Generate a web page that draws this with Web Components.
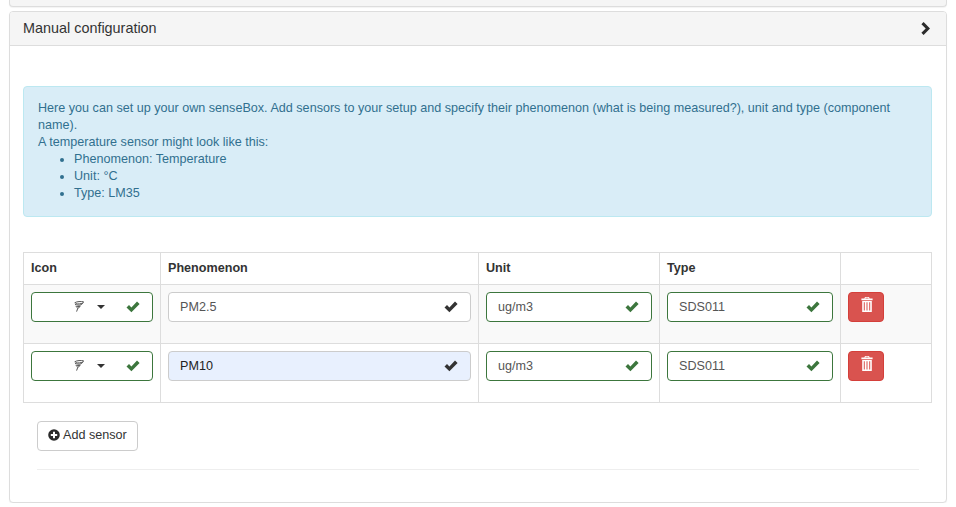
<!DOCTYPE html>
<html>
<head>
<meta charset="utf-8">
<title>Manual configuration</title>
<style>
html, body { margin: 0; padding: 0; background: #fff; }
body { font: 12.6px/17px "Liberation Sans", Arial, sans-serif; color: #333; overflow: hidden; }
</style>
</head>
<body>
<config-page>
  <stub-panel></stub-panel>
  <collapse-panel title="Manual configuration">
    <info-alert>
      Here you can set up your own senseBox. Add sensors to your setup and specify their phenomenon (what is being measured?), unit and type (component name).<br>
      A temperature sensor might look like this:
      <ul>
        <li>Phenomenon: Temperature</li>
        <li>Unit: °C</li>
        <li>Type: LM35</li>
      </ul>
    </info-alert>
    <sensor-table>
      <sensor-row phenomenon="PM2.5" unit="ug/m3" type="SDS011"></sensor-row>
      <sensor-row phenomenon="PM10" unit="ug/m3" type="SDS011" autofilled></sensor-row>
    </sensor-table>
    <add-button>Add sensor</add-button>
  </collapse-panel>
</config-page>

<script>
const CHECK = `<svg viewBox="0 0 14 12" width="14" height="12"><path fill="currentColor" d="M0.5 6.6 L3 4 L5.4 6.4 L11 0.6 L13.6 3 L5.4 11.2 Z"/></svg>`;

class ConfigPage extends HTMLElement {
  constructor() {
    super();
    this.attachShadow({ mode: 'open' }).innerHTML = `
      <style>
        :host { display: flex; flex-direction: column; gap: 4px; padding: 0 9px; }
      </style>
      <slot></slot>`;
  }
}

class StubPanel extends HTMLElement {
  constructor() {
    super();
    this.attachShadow({ mode: 'open' }).innerHTML = `
      <style>
        :host {
          display: block; height: 6px; background: #f5f5f5;
          border: 1px solid #ddd; border-top: 0;
          border-radius: 0 0 4px 4px; box-shadow: 0 1px 1px rgba(0,0,0,.05);
        }
      </style>`;
  }
}

class CollapsePanel extends HTMLElement {
  constructor() {
    super();
    this.attachShadow({ mode: 'open' }).innerHTML = `
      <style>
        :host {
          display: block; background: #fff; border: 1px solid #ddd; border-radius: 4px;
          box-shadow: 0 1px 1px rgba(0,0,0,.05);
        }
        .heading {
          display: flex; justify-content: space-between; align-items: center;
          height: 33px; padding: 0 16px 0 13px; background: #f5f5f5;
          border-bottom: 1px solid #ddd; border-radius: 3px 3px 0 0; color: #333; font-size: 14.4px;
        }
        .body { padding: 40px 14px 32px 13px; }
        svg { display: block; }
      </style>
      <div class="heading">
        <span id="title"></span>
        <svg viewBox="0 0 9 13" width="9" height="13"><path fill="#2b2b2b" d="M2.6 0 L9 6.5 L2.6 13 L0.4 10.8 L4.7 6.5 L0.4 2.2 Z"/></svg>
      </div>
      <div class="body"><slot></slot></div>`;
    this.shadowRoot.getElementById('title').textContent = this.getAttribute('title');
  }
}

class InfoAlert extends HTMLElement {
  constructor() {
    super();
    this.attachShadow({ mode: 'open' }).innerHTML = `
      <style>
        :host {
          display: block; padding: 13px 14px 14px; color: #31708f; background: #d9edf7;
          border: 1px solid #bce8f1; border-radius: 4px;
        }
        ::slotted(ul) { margin: 0; padding-left: 36px; }
      </style>
      <slot></slot>`;
  }
}

class SensorTable extends HTMLElement {
  constructor() {
    super();
    this.attachShadow({ mode: 'open' }).innerHTML = `
      <style>
        :host {
          display: block; margin-top: 35px; border: 1px solid #ddd; border-bottom-width: 0;
        }
        .head {
          display: grid; grid-template-columns: 136px 318px 181px 181px 1fr;
          height: 31px; border-bottom: 1px solid #ddd; font-weight: bold;
        }
        .head div { padding: 7px; border-left: 1px solid #ddd; }
        .head div:first-child { border-left: 0; }
        ::slotted(sensor-row:nth-of-type(odd)) { background: #f9f9f9; }
      </style>
      <div class="head">
        <div>Icon</div><div>Phenomenon</div><div>Unit</div><div>Type</div><div></div>
      </div>
      <slot></slot>`;
  }
}

class SensorRow extends HTMLElement {
  constructor() {
    super();
    this.attachShadow({ mode: 'open' }).innerHTML = `
      <style>
        :host {
          display: grid; grid-template-columns: 136px 318px 181px 181px 1fr;
          height: 58px; border-bottom: 1px solid #ddd;
        }
        .cell { padding: 7px; border-left: 1px solid #ddd; }
        .cell:first-of-type { border-left: 0; }
        .del {
          display: flex; align-items: flex-start; justify-content: center;
          width: 36px; height: 30px; box-sizing: border-box; padding: 4px 0 0 1px; background: #d9534f;
          border: 1px solid #d43f3a; border-radius: 4px;
        }
        svg { display: block; }
      </style>
      <div class="cell"><icon-select></icon-select></div>
      <div class="cell"><text-field id="p"></text-field></div>
      <div class="cell"><text-field id="u" valid></text-field></div>
      <div class="cell"><text-field id="t" valid></text-field></div>
      <div class="cell">
        <div class="del">
          <svg viewBox="0 0 12 15" width="12" height="15">
            <path fill="#fff" fill-rule="evenodd" d="M4 0 H8 L8.6 1.6 H11.6 V3.2 H0.4 V1.6 H3.4 Z M4.6 0.8 L4.4 1.6 H7.6 L7.4 0.8 Z M1.2 4 H10.8 V15 H1.2 Z M2.8 5.2 V13.6 H3.8 V5.2 Z M5.5 5.2 V13.6 H6.5 V5.2 Z M8.2 5.2 V13.6 H9.2 V5.2 Z"/>
          </svg>
        </div>
      </div>`;
    const root = this.shadowRoot;
    root.getElementById('p').setAttribute('value', this.getAttribute('phenomenon'));
    root.getElementById('u').setAttribute('value', this.getAttribute('unit'));
    root.getElementById('t').setAttribute('value', this.getAttribute('type'));
    if (this.hasAttribute('autofilled')) root.getElementById('p').setAttribute('autofilled', '');
  }
}

class TextField extends HTMLElement {
  static get observedAttributes() { return ['value']; }
  constructor() {
    super();
    this.attachShadow({ mode: 'open' }).innerHTML = `
      <style>
        :host {
          display: flex; align-items: center; justify-content: space-between;
          height: 30px; box-sizing: border-box; padding: 0 12px 0 11px;
          background: #fff; color: #555; border: 1px solid #ccc; border-radius: 4px;
        }
        :host([valid]) { border-color: #3c763d; }
        :host([autofilled]) { background: #e8f0fe; color: #222; }
        svg { display: block; color: #333; }
        :host([valid]) svg { color: #3c763d; }
      </style>
      <span id="v"></span>${CHECK}`;
  }
  attributeChangedCallback(name, oldValue, value) {
    this.shadowRoot.getElementById('v').textContent = value;
  }
}

class IconSelect extends HTMLElement {
  constructor() {
    super();
    this.attachShadow({ mode: 'open' }).innerHTML = `
      <style>
        :host {
          display: flex; align-items: center; height: 30px; box-sizing: border-box;
          padding: 0 0 0 42px; background: #fff; border: 1px solid #3c763d; border-radius: 4px;
        }
        svg { display: block; }
        .tornado { margin-bottom: 2px; }
        .caret {
          margin-left: 13px; width: 0; height: 0;
          border-top: 4px solid #333; border-left: 4px solid transparent; border-right: 4px solid transparent;
        }
        .ok { margin-left: 21px; color: #3c763d; }
      </style>
      <svg class="tornado" viewBox="0 0 10 11" width="10" height="11" fill="none" stroke="#555" stroke-width="1">
        <path d="M0.6 1.8 C3 0.4 7 0.3 9.6 0.8 C9 2.2 8 3.4 7 3.8 C5 4.4 2.8 4.2 1 3.2 M1.6 2.6 C4 3.2 6.6 3 8.8 2 M1.6 5.2 C3 5.8 4.8 5.6 6.2 5 L4.8 6.9 C4 7.2 3.2 7 2.6 6.6 M3.8 7.2 L2.6 10.6"/>
      </svg>
      <span class="caret"></span>
      <span class="ok">${CHECK}</span>`;
  }
}

class AddButton extends HTMLElement {
  constructor() {
    super();
    this.attachShadow({ mode: 'open' }).innerHTML = `
      <style>
        :host { display: block; margin: 18px 13px 0 14px; padding-bottom: 18px; border-bottom: 1px solid #eee; }
        .btn {
          display: inline-flex; align-items: center; gap: 3px; height: 30px; box-sizing: border-box;
          padding: 0 10px 2px; background: #fff; color: #333; border: 1px solid #ccc; border-radius: 4px;
        }
        svg { display: block; }
      </style>
      <div class="btn">
        <svg viewBox="0 0 12 12" width="12" height="12">
          <path fill="#2b2b2b" fill-rule="evenodd" d="M6 0.2 A5.8 5.8 0 1 1 6 11.8 A5.8 5.8 0 1 1 6 0.2 Z M5 2.8 V5 H2.8 V7 H5 V9.2 H7 V7 H9.2 V5 H7 V2.8 Z"/>
        </svg>
        <slot></slot>
      </div>`;
  }
}

customElements.define('text-field', TextField);
customElements.define('icon-select', IconSelect);
customElements.define('sensor-row', SensorRow);
customElements.define('sensor-table', SensorTable);
customElements.define('info-alert', InfoAlert);
customElements.define('add-button', AddButton);
customElements.define('stub-panel', StubPanel);
customElements.define('collapse-panel', CollapsePanel);
customElements.define('config-page', ConfigPage);
</script>
</body>
</html>
